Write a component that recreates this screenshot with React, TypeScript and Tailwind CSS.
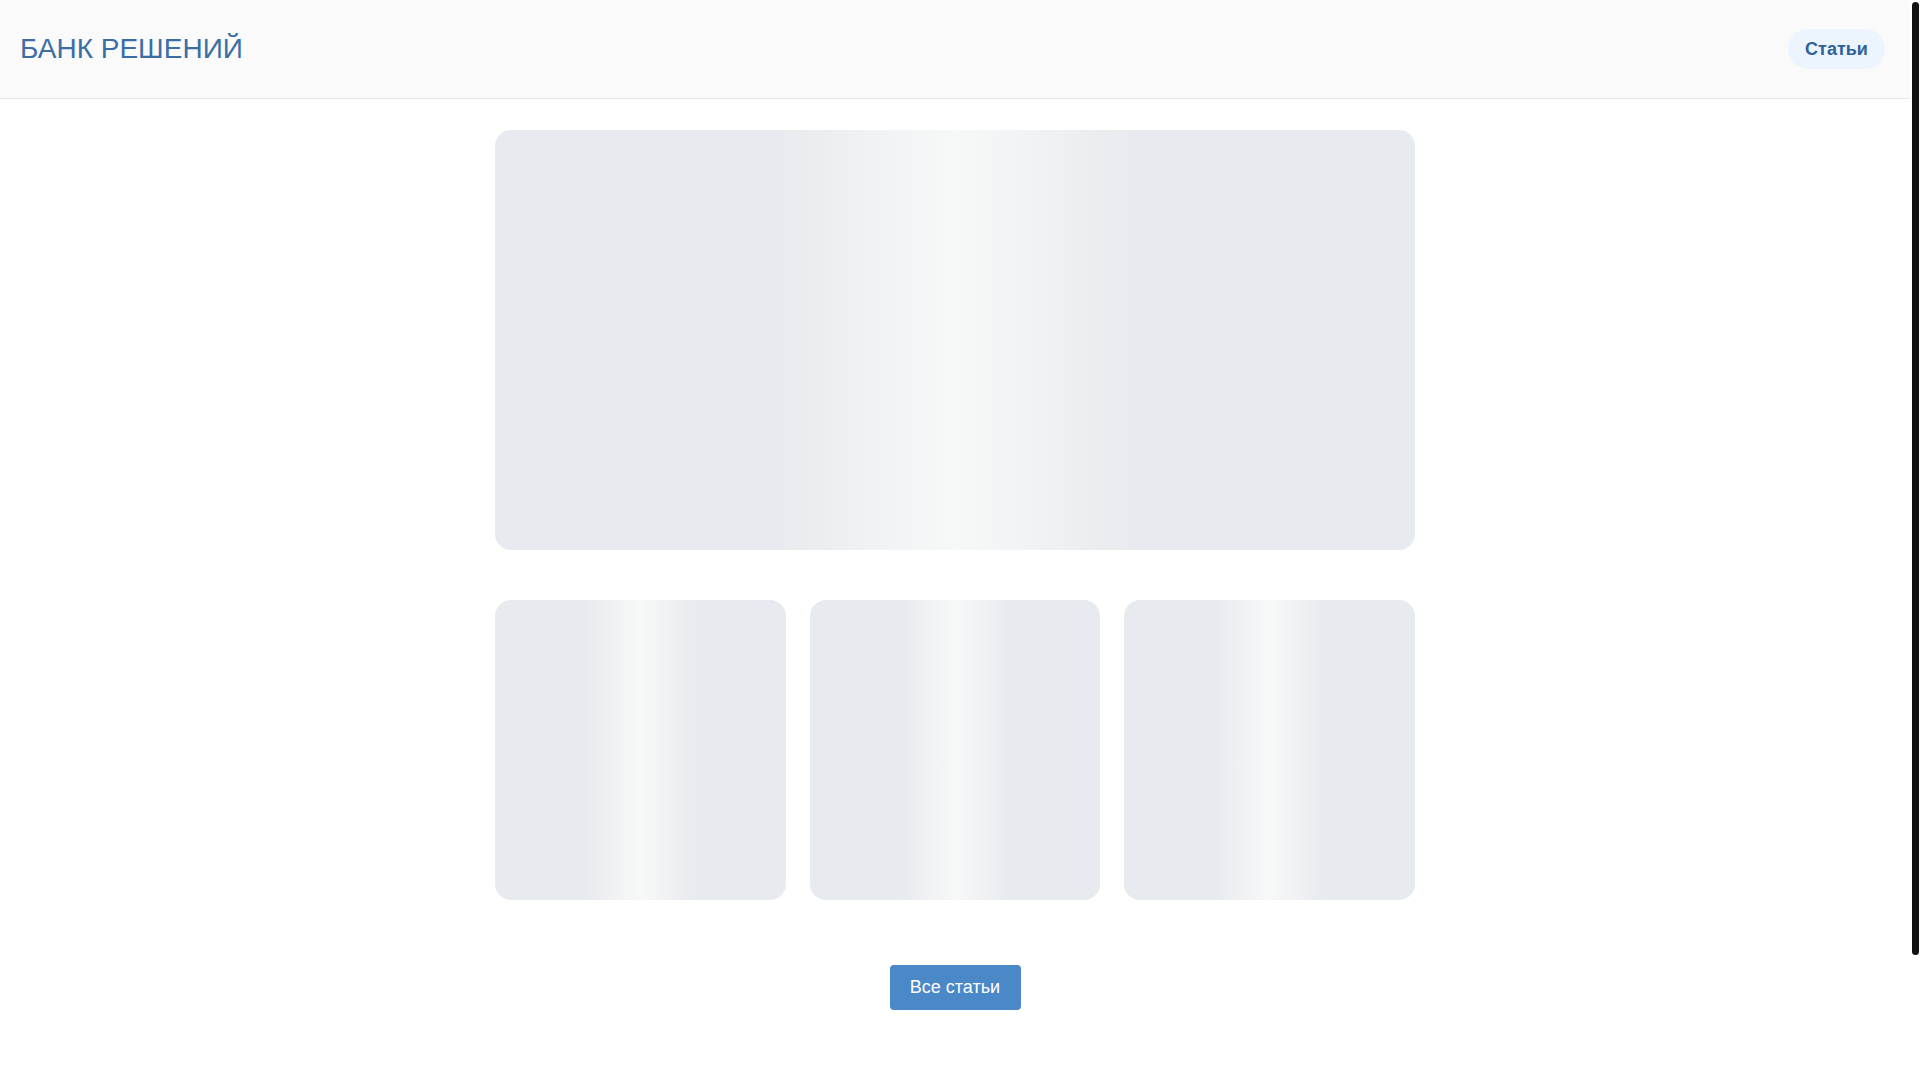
const shimmer =
  "bg-linear-to-r from-[#e7eaee] from-30% via-[#f7f8f8] via-50% to-[#e7eaee] to-70%";

const cards = [1, 2, 3];

const App = () => {
  return (
    <div className="h-screen flex overflow-hidden bg-white [font-family:'Liberation_Sans',Arial,sans-serif]">
      <div className="flex-1 min-w-0">
        {/* Header */}
        <header className="h-[99px] flex items-center justify-between pl-5 pr-[25px] bg-[#fafafa] border-b border-[#e3eaf2]">
          <a href="#" className="text-[28px] leading-none text-[#3a6ea5]">
            БАНК РЕШЕНИЙ
          </a>
          <button className="h-10 w-[97px] rounded-full bg-[#ecf4fd] text-[18px] font-bold text-[#2f6298]">
            Статьи
          </button>
        </header>

        {/* Content */}
        <main className="w-[920px] mx-auto pt-[31px] pb-[210px]">
          <div className={`h-[420px] rounded-2xl ${shimmer}`} />

          <div className="grid grid-cols-3 gap-6 mt-[50px]">
            {cards.map((c) => (
              <div key={c} className={`h-[300px] rounded-2xl ${shimmer}`} />
            ))}
          </div>

          <div className="flex justify-center mt-[65px]">
            <button className="h-[45px] w-[131px] rounded bg-[#4a88c7] text-[18px] text-white">
              Все статьи
            </button>
          </div>
        </main>
      </div>

      {/* Scrollbar */}
      <div className="w-[10px] shrink-0 bg-white pt-[2px]">
        <div className="mx-auto w-[7px] h-[953px] rounded-full bg-[#111111]" />
      </div>
    </div>
  );
};

export default App;
